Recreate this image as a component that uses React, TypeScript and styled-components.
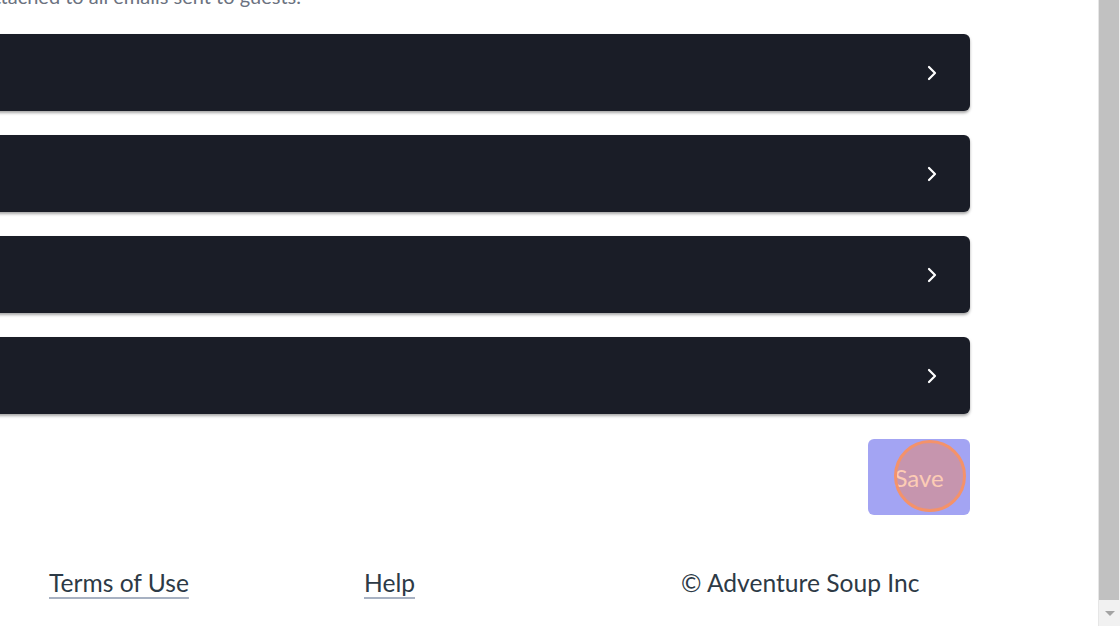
import React from "react";
import styled, { createGlobalStyle } from "styled-components";

const GlobalStyle = createGlobalStyle`
	html, body {
		margin: 0;
		padding: 0;
		background: #ffffff;
		overflow: hidden;
	}

	body {
		font-family: Lato, "Open Sans", sans-serif;
	}
`;

const sections = ["Email signature", "Attachments", "Reminders", "Notifications"];

const ChevronRight = () => (
	<svg width="20" height="20" viewBox="0 0 20 20" fill="none">
		<path
			d="M7 4 L13 10 L7 16"
			stroke="#ffffff"
			strokeWidth="2.2"
			strokeLinecap="round"
			strokeLinejoin="round"
		/>
	</svg>
);

export default function App() {
	return (
		<>
			<GlobalStyle />
			<Page>
				<Main>
					<HelpRow>
						<HelpText>
							This will be attached to all emails sent to guests.
						</HelpText>
					</HelpRow>
					<SectionList>
						{sections.map((name) => (
							<SectionBar key={name} aria-label={name}>
								<ChevronRight />
							</SectionBar>
						))}
					</SectionList>
					<Actions>
						<SaveButton>
							Save
							<ClickRing />
						</SaveButton>
					</Actions>
					<Footer>
						<FooterLink href="#">Terms of Use</FooterLink>
						<FooterLink href="#">Help</FooterLink>
						<Copyright>© Adventure Soup Inc</Copyright>
					</Footer>
				</Main>
				<Scrollbar>
					<ScrollThumb />
					<ScrollArrow />
				</Scrollbar>
			</Page>
		</>
	);
}

const Page = styled.div`
	display: flex;
	width: 1120px;
	height: 626px;
	overflow: hidden;
`;

const Main = styled.div`
	flex: 1;
	display: flex;
	flex-direction: column;
	overflow: hidden;
	padding-right: 128px;
`;

const HelpRow = styled.div`
	display: flex;
	justify-content: flex-end;
	width: 301px;
	margin-top: -17px;
`;

const HelpText = styled.p`
	margin: 0;
	flex-shrink: 0;
	font-size: 20px;
	line-height: 26px;
	color: #6b7280;
	white-space: nowrap;
`;

const SectionList = styled.div`
	display: flex;
	flex-direction: column;
	gap: 24px;
	margin: 25px 0 0 -24px;
`;

const SectionBar = styled.div`
	height: 77px;
	background: #1a1d27;
	border-radius: 6px;
	box-shadow: 0 2px 3px rgba(0, 0, 0, 0.35);
	display: flex;
	align-items: center;
	justify-content: flex-end;
	padding-right: 28px;
`;

const Actions = styled.div`
	display: flex;
	justify-content: flex-end;
	margin-top: 25px;
`;

const SaveButton = styled.button`
	position: relative;
	width: 102px;
	height: 76px;
	border: none;
	border-radius: 6px;
	background: #a3a4f3;
	color: #ffffff;
	font-family: Lato, "Open Sans", sans-serif;
	font-size: 24px;
	padding: 0;
	cursor: pointer;
`;

const ClickRing = styled.span`
	position: absolute;
	left: 26px;
	top: 1px;
	width: 66px;
	height: 66px;
	border-radius: 50%;
	border: 3px solid #f4926a;
	background: rgba(250, 128, 70, 0.4);
`;

const Footer = styled.footer`
	display: grid;
	grid-template-columns: 315px 317px 1fr;
	padding-left: 49px;
	margin-top: 52px;
	font-size: 24.6px;
	line-height: 32px;
`;

const FooterLink = styled.a`
	justify-self: start;
	color: #2d3a46;
	text-decoration: underline;
	text-decoration-color: #a7b1c2;
	text-decoration-thickness: 2px;
	text-underline-offset: 5px;
`;

const Copyright = styled.span`
	color: #2d3a46;
	white-space: nowrap;
`;

const Scrollbar = styled.div`
	width: 22px;
	flex-shrink: 0;
	display: flex;
	flex-direction: column;
	background: #f1f1f1;
	border-left: 1px solid #e6e6e6;
	box-sizing: border-box;
`;

const ScrollThumb = styled.div`
	flex: 1;
	margin: 0 1px 0 0;
	background: #c1c1c1;
`;

const ScrollArrow = styled.div`
	height: 26px;
	display: flex;
	align-items: center;
	justify-content: center;

	&::after {
		content: "";
		border-left: 5px solid transparent;
		border-right: 5px solid transparent;
		border-top: 5px solid #a3a3a3;
	}
`;
